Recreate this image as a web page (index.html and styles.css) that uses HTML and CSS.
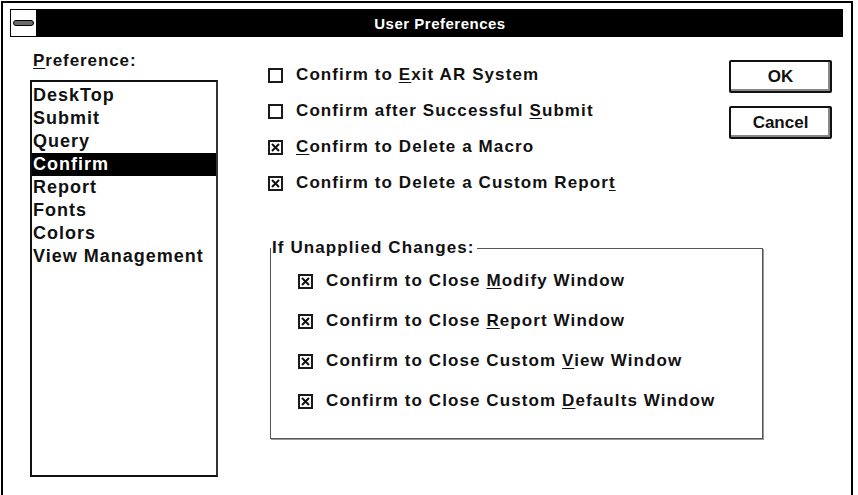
FILE: index.html
```html
<!DOCTYPE html>
<html lang="en">

<head>
    <meta charset="UTF-8">
    <title>User Preferences</title>
    <link rel="stylesheet" href="styles.css">
</head>

<body>
    <div class="window">
        <!-- 타이틀바 -->
        <div class="titlebar">
            <span class="sysmenu"><span class="dash"></span></span>
            <span class="title">User Preferences</span>
        </div>

        <div class="main">
            <!-- 왼쪽: 목록 -->
            <div class="prefCol">
                <div class="label"><u>P</u>reference:</div>
                <ul class="listbox">
                    <li>DeskTop</li>
                    <li>Submit</li>
                    <li>Query</li>
                    <li class="on">Confirm</li>
                    <li>Report</li>
                    <li>Fonts</li>
                    <li>Colors</li>
                    <li>View Management</li>
                </ul>
            </div>

            <!-- 오른쪽 영역 -->
            <div class="optCol">
                <div class="topRow">
                    <ul class="checks">
                        <li><span class="box"></span><span>Confirm to <u>E</u>xit AR System</span></li>
                        <li><span class="box"></span><span>Confirm after Successful <u>S</u>ubmit</span></li>
                        <li><span class="box checked"><svg viewBox="0 0 11 11"><path d="M2 2L9 9M9 2L2 9" /></svg></span><span><u>C</u>onfirm to Delete a Macro</span></li>
                        <li><span class="box checked"><svg viewBox="0 0 11 11"><path d="M2 2L9 9M9 2L2 9" /></svg></span><span>Confirm to Delete a Custom Repor<u>t</u></span></li>
                    </ul>

                    <div class="btnCol">
                        <button class="btn">OK</button>
                        <button class="btn">Cancel</button>
                    </div>
                </div>

                <fieldset class="group">
                    <legend>If Unapplied Changes:</legend>
                    <ul class="checks loose">
                        <li><span class="box checked"><svg viewBox="0 0 11 11"><path d="M2 2L9 9M9 2L2 9" /></svg></span><span>Confirm to Close <u>M</u>odify Window</span></li>
                        <li><span class="box checked"><svg viewBox="0 0 11 11"><path d="M2 2L9 9M9 2L2 9" /></svg></span><span>Confirm to Close <u>R</u>eport Window</span></li>
                        <li><span class="box checked"><svg viewBox="0 0 11 11"><path d="M2 2L9 9M9 2L2 9" /></svg></span><span>Confirm to Close Custom <u>V</u>iew Window</span></li>
                        <li><span class="box checked"><svg viewBox="0 0 11 11"><path d="M2 2L9 9M9 2L2 9" /></svg></span><span>Confirm to Close Custom <u>D</u>efaults Window</span></li>
                    </ul>
                </fieldset>
            </div>
        </div>
    </div>
</body>

</html>
```

FILE: styles.css
```css
/* reset */
* {
    margin: 0;
    box-sizing: border-box;
}

ul {
    padding: 0;
    list-style: none;
}

body {
    background: #fff;
    color: #111;
    font-family: "Liberation Sans", Arial, sans-serif;
    font-weight: bold;
    font-size: 17px;
    letter-spacing: 1.1px;
}

u {
    text-underline-offset: 2px;
    text-decoration-thickness: 1px;
}

.window {
    width: 852px;
    height: 494px;
    margin: 1px 0 0 1px;
    border: 2px solid #000;
    border-bottom: 0;
    overflow: hidden;
}

/* 타이틀바 */
.titlebar {
    display: flex;
    align-items: center;
    height: 28px;
    margin: 6px 8px 0 7px;
    background: #000;
}

.sysmenu {
    display: flex;
    align-items: center;
    justify-content: center;
    width: 27px;
    height: 28px;
    background: #fff;
    border: 1px solid #000;
}

.dash {
    width: 21px;
    height: 6px;
    background: #6a6a6a;
    border: 1px solid #000;
    border-radius: 3px;
}

.title {
    flex: 1;
    text-align: center;
    color: #fff;
    font-size: 15px;
    letter-spacing: 0.5px;
}

.main {
    display: flex;
    align-items: flex-start;
}

/* 왼쪽 목록 */
.prefCol {
    flex: none;
    width: 188px;
    margin-left: 27px;
}

.label {
    height: 20px;
    line-height: 20px;
    margin: 14px 0 9px 3px;
    letter-spacing: 0.9px;
}

.listbox {
    height: 397px;
    padding-top: 2px;
    border: 2px solid #111;
    border-right-color: #333;
    font-size: 18px;
    letter-spacing: 1px;
}

.listbox li {
    height: 23px;
    line-height: 23px;
    padding-left: 1px;
    white-space: nowrap;
}

.listbox li.on {
    background: #000;
    color: #fff;
}

/* 오른쪽 영역 */
.optCol {
    flex: 1;
    margin: 0 19px 0 50px;
}

.topRow {
    display: flex;
    justify-content: space-between;
    align-items: flex-start;
}

.checks {
    display: flex;
    flex-direction: column;
    gap: 14px;
    margin-top: 27px;
}

.checks li {
    display: flex;
    align-items: center;
    gap: 13px;
    height: 22px;
    line-height: 22px;
    white-space: nowrap;
}

.box {
    flex: none;
    width: 15px;
    height: 15px;
    border: 2px solid #1a1a1a;
    background: #fff;
}

.box svg {
    display: block;
    width: 11px;
    height: 11px;
}

.box svg path {
    stroke: #111;
    stroke-width: 2;
    fill: none;
}

.group {
    width: 493px;
    margin: 44px 0 0 2px;
    padding: 0 0 26px 27px;
    border: 1px solid #555;
    box-shadow: 1px 1px 0 #999;
}

.group legend {
    height: 20px;
    line-height: 20px;
    margin-left: -27px;
    padding: 0 2px 0 1px;
}

.checks.loose {
    gap: 18px;
    margin-top: 12px;
}

/* 버튼 */
.btnCol {
    display: flex;
    flex-direction: column;
    gap: 13px;
    margin-top: 23px;
}

.btn {
    width: 103px;
    height: 33px;
    font: inherit;
    color: #111;
    background: #fff;
    border: 2px solid #111;
    border-radius: 2px;
    box-shadow: inset -2px -2px 0 #888;
}
```
